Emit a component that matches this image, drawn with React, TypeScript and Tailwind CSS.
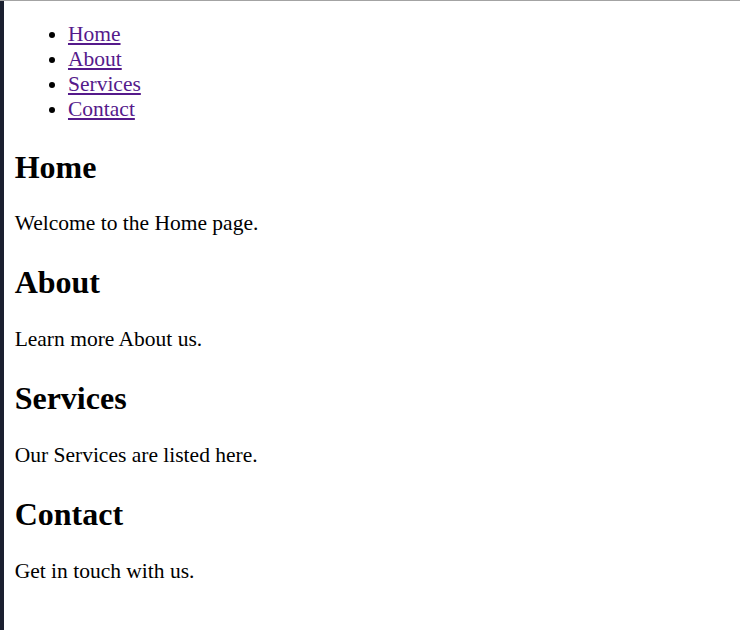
import React from "react";

const pages = [
  { title: "Home", text: "Welcome to the Home page." },
  { title: "About", text: "Learn more About us." },
  { title: "Services", text: "Our Services are listed here." },
  { title: "Contact", text: "Get in touch with us." },
];

const App = () => {
  return (
    <div className="min-h-screen bg-white border-t border-[#a3a3a3] font-['Liberation_Serif','Times_New_Roman',serif] text-black">
      <div className="min-h-[629px] border-l-4 border-[#1b2030] pl-[10.67px] pt-[21px] flex flex-col">
        <ul className="list-disc pl-[53.33px] text-[21.5px] leading-[25px]">
          {pages.map((p) => (
            <li key={p.title}>
              <a href={"#" + p.title.toLowerCase()} className="text-[#551a8b] underline">
                {p.title}
              </a>
            </li>
          ))}
        </ul>
        {pages.map((p) => (
          <section key={p.title} id={p.title.toLowerCase()}>
            <h2 className="mt-[26.5px] text-[32px] font-bold leading-[37px]">{p.title}</h2>
            <p className="mt-[25.8px] mb-[1.7px] text-[21.5px] leading-[25px]">{p.text}</p>
          </section>
        ))}
      </div>
    </div>
  );
};

export default App;
